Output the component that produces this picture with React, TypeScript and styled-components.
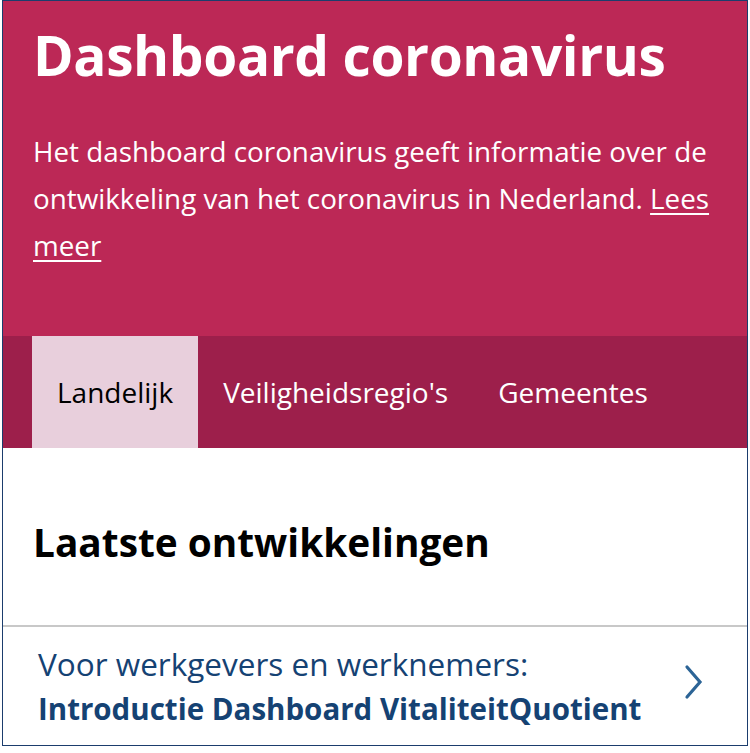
import React from 'react';
import styled, { createGlobalStyle } from 'styled-components';

const GlobalStyle = createGlobalStyle`
  html, body {
    margin: 0;
    padding: 0;
    background: #ffffff;
  }
  body {
    font-family: 'Open Sans', 'Noto Sans', sans-serif;
  }
`;

const Frame = styled.div`
  margin-left: 2px;
  width: 744px;
  height: 744px;
  border: 1px solid #1b3d6d;
  overflow: hidden;
  display: flex;
  flex-direction: column;
`;

const Hero = styled.header`
  background: #bc2856;
  color: #ffffff;
  height: 335px;
  box-sizing: border-box;
  padding: 17px 30px 0 30px;
`;

const Title = styled.h1`
  margin: 0;
  font-size: 55px;
  line-height: 74px;
  font-weight: 700;
  letter-spacing: -0.4px;
`;

const Intro = styled.p`
  margin: 36px 0 0;
  font-size: 27.8px;
  line-height: 47px;
  font-weight: 400;

  a {
    color: #ffffff;
    text-decoration: underline;
    text-underline-offset: 4px;
    text-decoration-thickness: 2px;
  }
`;

const TabBar = styled.nav`
  background: #9d1f4b;
  height: 112px;
  display: flex;
  padding-left: 29px;
`;

const Tab = styled.a<{ active?: boolean }>`
  display: flex;
  align-items: center;
  padding: 0 25px;
  font-size: 28px;
  color: ${(p) => (p.active ? '#000000' : '#ffffff')};
  background: ${(p) => (p.active ? '#e8cfdc' : 'transparent')};
  text-decoration: none;
`;

const Section = styled.section`
  height: 177px;
  box-sizing: border-box;
  padding: 70px 30px 0;
`;

const Heading = styled.h2`
  margin: 0;
  font-size: 38.8px;
  line-height: 48px;
  font-weight: 700;
  color: #000000;
`;

const LinkRow = styled.a`
  display: flex;
  align-items: center;
  justify-content: space-between;
  border-top: 2px solid #c8c8c8;
  padding: 14px 42px 0 35px;
  color: #154273;
  text-decoration: none;
`;

const LinkText = styled.div`
  font-size: 31.5px;
  line-height: 45px;
`;

const Strong = styled.div`
  font-weight: 700;
  font-size: 29.5px;
`;

const Chevron = styled.svg`
  width: 22px;
  height: 36px;
  flex: none;
  margin-top: -8px;
`;

export default function App() {
  return (
    <>
      <GlobalStyle />
      <Frame>
        <Hero>
          <Title>Dashboard coronavirus</Title>
          <Intro>
            Het dashboard coronavirus geeft informatie over de ontwikkeling van het
            coronavirus in Nederland. <a href="#">Lees meer</a>
          </Intro>
        </Hero>
        <TabBar>
          <Tab active href="#">
            Landelijk
          </Tab>
          <Tab href="#">Veiligheidsregio's</Tab>
          <Tab href="#">Gemeentes</Tab>
        </TabBar>
        <Section>
          <Heading>Laatste ontwikkelingen</Heading>
        </Section>
        <LinkRow href="#">
          <LinkText>
            Voor werkgevers en werknemers:
            <Strong>Introductie Dashboard VitaliteitQuotient</Strong>
          </LinkText>
          <Chevron viewBox="0 0 22 36">
            <path d="M4 3 L17 18 L4 33" fill="none" stroke="#2c6496" strokeWidth="3.2" strokeLinecap="round" />
          </Chevron>
        </LinkRow>
      </Frame>
    </>
  );
}
